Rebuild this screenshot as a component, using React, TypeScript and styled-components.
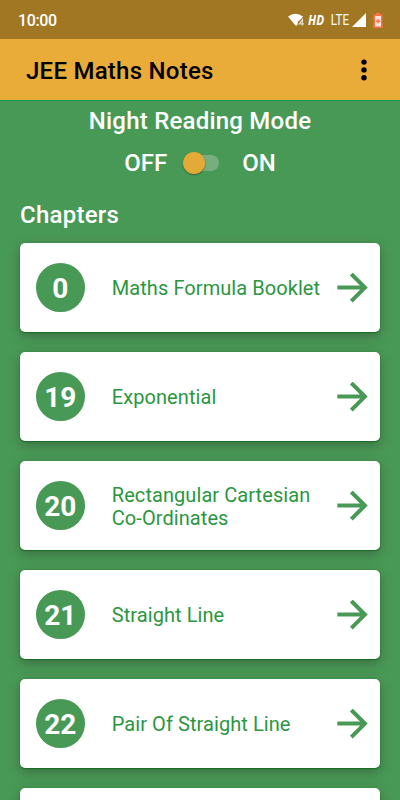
import React, { useState } from "react";
import styled, { createGlobalStyle } from "styled-components";

const GlobalStyle = createGlobalStyle`
  * { box-sizing: border-box; }
  body { margin: 0; background: #499956; font-family: Roboto, "Liberation Sans", sans-serif; }
`;

const Screen = styled.div`
  width: 400px;
  height: 800px;
  overflow: hidden;
  background: #499956;
  display: flex;
  flex-direction: column;
`;

const StatusBar = styled.div`
  height: 39px;
  flex: none;
  background: #a17724;
  color: #fff;
  display: flex;
  align-items: center;
  justify-content: space-between;
  padding: 1px 17px 0 18px;
`;

const Clock = styled.span`
  font-size: 16px;
  font-weight: 500;
  letter-spacing: -0.35px;
`;

const StatusIcons = styled.div`
  display: flex;
  align-items: center;
  height: 16px;
`;

const HdLabel = styled.span`
  font: italic 700 13.5px/16px "Open Sans", sans-serif;
  width: 22px;
  margin-left: 4px;
  transform: scaleX(0.86);
  transform-origin: left;
`;

const LteLabel = styled.span`
  font-size: 14.5px;
  line-height: 16px;
  width: 22px;
  padding: 1px 0 0 1px;
  transform: scaleX(0.8);
  transform-origin: left;
`;

const AppBar = styled.header`
  height: 62px;
  flex: none;
  background: #e9ac38;
  border-bottom: 1px solid #159a5c;
  display: flex;
  align-items: center;
  justify-content: space-between;
  padding: 2px 27px 0 26px;
`;

const Title = styled.h1`
  margin: 0;
  font-size: 24px;
  line-height: 28px;
  font-weight: 500;
  letter-spacing: 0.25px;
  color: #000;
`;

const MenuButton = styled.button`
  border: 0;
  padding: 0;
  background: none;
  display: flex;
  width: 18px;
  height: 24px;
  justify-content: center;
`;

const ModePanel = styled.section`
  flex: none;
  height: 83px;
  display: flex;
  flex-direction: column;
  align-items: center;
  color: #fff;
  font-size: 24px;
  font-weight: 500;
  line-height: 28px;
  padding-top: 6px;
`;

const ModeTitle = styled.span`
  letter-spacing: 0.22px;
`;

const ModeRow = styled.div`
  display: flex;
  align-items: center;
  margin-top: 14px;
`;

const Switch = styled.button`
  border: 0;
  padding: 0;
  width: 37px;
  height: 23px;
  margin: 0 22.5px 0 15.5px;
  background: none;
  display: flex;
  align-items: center;
`;

const Track = styled.span`
  width: 31px;
  height: 16px;
  margin: -1px 0 0 5px;
  border-radius: 8px;
  background: #76af7d;
  display: flex;
  align-items: center;
`;

const Thumb = styled.span<{ $on: boolean }>`
  flex: none;
  width: 22px;
  height: 22px;
  margin-left: ${(p) => (p.$on ? "14px" : "-5px")};
  border-radius: 50%;
  background: #e3aa37;
  box-shadow: 0 1px 2px rgba(0, 0, 0, 0.35);
`;

const Heading = styled.h2`
  flex: none;
  margin: 17px 0 14px 20px;
  color: #fff;
  font-size: 24px;
  line-height: 28px;
  font-weight: 500;
  letter-spacing: 0.25px;
`;

const ChapterList = styled.main`
  display: flex;
  flex-direction: column;
  gap: 20px;
  padding: 0 20px;
`;

const Card = styled.article`
  flex: none;
  height: 89px;
  border-radius: 5px;
  background: #fff;
  box-shadow: 0 0 1px #08780f, 0 1px 1px rgba(8, 100, 15, 0.6), 0 4px 12px rgba(40, 50, 40, 0.42);
  display: flex;
  align-items: center;
  padding: 0 12px 0 16px;
`;

const Badge = styled.div`
  flex: none;
  width: 48.6px;
  height: 48.6px;
  border-radius: 50%;
  background: #499956;
  color: #fff;
  font-weight: 700;
  font-size: 28px;
  line-height: 51px;
  text-align: center;
`;

const ChapterName = styled.div`
  flex: 1;
  margin-left: 27.2px;
  padding-top: 2px;
  color: #2b9640;
  font-size: 20px;
  font-weight: 400;
  line-height: 23px;
  letter-spacing: 0.07px;
  white-space: pre-line;
`;

const chapters = [
  { number: 0, name: "Maths Formula Booklet" },
  { number: 19, name: "Exponential" },
  { number: 20, name: "Rectangular Cartesian\nCo-Ordinates" },
  { number: 21, name: "Straight Line" },
  { number: 22, name: "Pair Of Straight Line" },
];

const WifiIcon = () => (
  <svg width="16" height="14" viewBox="0 0 16 14">
    <path d="M0 3.6Q7.5-2 15 3.6L12.8 6.2 10 8.5 9.2 12.5H7.5Z" fill="#fff" />
    <path d="M14.4 12.5V6.5L11.3 10.8H15.8" fill="none" stroke="#e8dfcd" strokeWidth="1.2" />
  </svg>
);

const SignalIcon = () => (
  <svg width="14" height="14" viewBox="0 0 14 14">
    <path d="M0 14L14 0V14Z" fill="#fff" />
  </svg>
);

const BatteryIcon = () => (
  <svg width="10" height="15" viewBox="0 0 10 15">
    <path d="M3 0H7V1.5H9.5V15H0.5V1.5H3Z" fill="#ff7049" />
    <path d="M2 3H8V13.5H2Z" fill="#ffe3dc" />
    <path d="M5 6V10.4M2.8 8.2H7.2" stroke="#ff7049" strokeWidth="1.4" />
  </svg>
);

const BatterySlot = styled.span`
  display: flex;
  margin-left: 7px;
`;

const DotsIcon = () => (
  <svg width="18" height="24" viewBox="0 0 18 24" fill="#000">
    <circle cx="9" cy="3.1" r="2.7" />
    <circle cx="9" cy="10.9" r="2.7" />
    <circle cx="9" cy="18.7" r="2.7" />
  </svg>
);

const ArrowIcon = () => (
  <svg width="31" height="30" viewBox="0 0 31 30" fill="none" stroke="#499956" strokeWidth="4">
    <path d="M0.3 14.6H27M14.3 1L27.9 14.6L14.3 28.2" />
  </svg>
);

export default function App() {
  const [night, setNight] = useState(false);
  return (
    <Screen>
      <GlobalStyle />
      <StatusBar>
        <Clock>10:00</Clock>
        <StatusIcons>
          <WifiIcon />
          <HdLabel>HD</HdLabel>
          <LteLabel>LTE</LteLabel>
          <SignalIcon />
          <BatterySlot>
            <BatteryIcon />
          </BatterySlot>
        </StatusIcons>
      </StatusBar>
      <AppBar>
        <Title>JEE Maths Notes</Title>
        <MenuButton aria-label="More options">
          <DotsIcon />
        </MenuButton>
      </AppBar>
      <ModePanel>
        <ModeTitle>Night Reading Mode</ModeTitle>
        <ModeRow>
          <span>OFF</span>
          <Switch role="switch" aria-checked={night} onClick={() => setNight(!night)}>
            <Track>
              <Thumb $on={night} />
            </Track>
          </Switch>
          <span>ON</span>
        </ModeRow>
      </ModePanel>
      <Heading>Chapters</Heading>
      <ChapterList>
        {chapters.map((c) => (
          <Card key={c.number}>
            <Badge>{c.number}</Badge>
            <ChapterName>{c.name}</ChapterName>
            <ArrowIcon />
          </Card>
        ))}
        <Card />
      </ChapterList>
    </Screen>
  );
}
